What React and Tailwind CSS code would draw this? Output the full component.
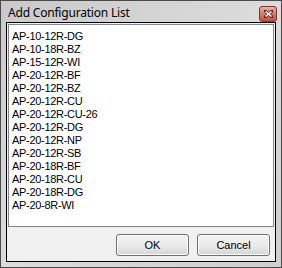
import React from 'react';

const items = [
  'AP-10-12R-DG',
  'AP-10-18R-BZ',
  'AP-15-12R-WI',
  'AP-20-12R-BF',
  'AP-20-12R-BZ',
  'AP-20-12R-CU',
  'AP-20-12R-CU-26',
  'AP-20-12R-DG',
  'AP-20-12R-NP',
  'AP-20-12R-SB',
  'AP-20-18R-BF',
  'AP-20-18R-CU',
  'AP-20-18R-DG',
  'AP-20-8R-WI',
];

function CloseButton() {
  return (
    <div className="w-[18px] h-[16px] mt-[5px] rounded-[3px] border border-[#7a3a30] bg-gradient-to-b from-[#eab0a2] via-[#d47a68] to-[#c5503c] flex items-center justify-center">
      <svg width="9" height="8" viewBox="0 0 9 8">
        <path d="M1 1 L8 7 M8 1 L1 7" stroke="#5a2a22" strokeWidth="3" strokeLinecap="square" />
        <path d="M1.5 1.5 L7.5 6.5 M7.5 1.5 L1.5 6.5" stroke="#ffffff" strokeWidth="1.6" />
      </svg>
    </div>
  );
}

function WinButton({ children }) {
  return (
    <button className="w-[73px] h-[22px] rounded-[3px] border border-[#707070] bg-gradient-to-b from-[#f2f2f2] via-[#ebebeb] to-[#d5d5d5] text-[11px] text-black shadow-[inset_0_0_0_1px_#fcfcfc]">
      {children}
    </button>
  );
}

export default function App() {
  return (
    <div
      className="w-[282px] h-[268px] border border-[#4a4a4a] bg-gradient-to-br from-[#c9c9c9] via-[#dcdcdc] to-[#cfcfcf] flex flex-col"
      style={{ fontFamily: '"Liberation Sans", Arial, sans-serif' }}
    >
      <div className="h-[21px] flex items-start justify-between pl-[7px] pr-[4px]">
        <span className="text-[12px] leading-[16px] pt-[4px] tracking-[-0.2px] text-black" style={{ fontFamily: '"Noto Sans", "Open Sans", sans-serif' }}>
          Add Configuration List
        </span>
        <CloseButton />
      </div>
      <div className="flex-1 mx-[5px] mb-[5px] border border-black bg-[#f0f0f0] flex flex-col">
        <div className="mx-[1px] mt-[1px] h-[203px] border border-[#828790] bg-white pl-[3px] pt-[5px]">
          {items.map((item) => (
            <div key={item} className="h-[13px] leading-[13px] text-[11px] tracking-[-0.3px] text-black">
              {item}
            </div>
          ))}
        </div>
        <div className="flex justify-end gap-[8px] mt-[7px] pr-[5px]">
          <WinButton>OK</WinButton>
          <WinButton>Cancel</WinButton>
        </div>
      </div>
    </div>
  );
}
